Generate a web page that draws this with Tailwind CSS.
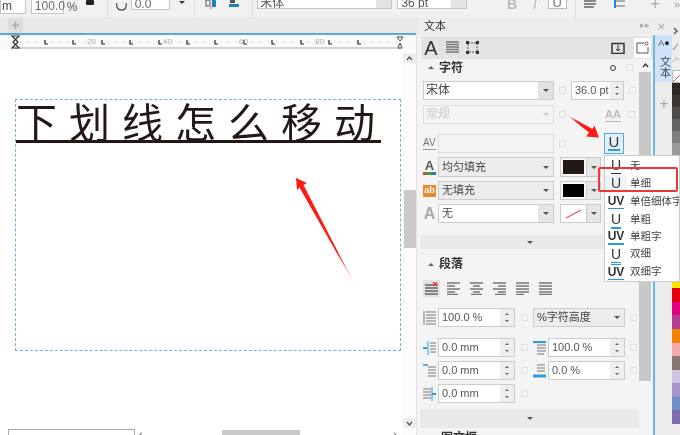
<!DOCTYPE html>
<html lang="zh">
<head>
  <meta charset="UTF-8" />
  <title>文本</title>
  <script src="https://cdn.jsdelivr.net/npm/@tailwindcss/browser@4"></script>
</head>
<body class="m-0 overflow-hidden">
<div class="relative w-[680px] h-[435px] overflow-hidden flex flex-col bg-[#f0f0f0] text-[#444] text-[11px] blur-[0.4px] font-['Liberation_Sans','Noto_Sans_CJK_SC',sans-serif]">

  <!-- top property bar -->
  <div class="h-[17px] flex items-start overflow-hidden shrink-0 bg-[#f1f1f1]">
    <div class="w-[26px] h-[14px] bg-white border border-t-0 border-[#c4c4c4] leading-[13px] text-[12px] pl-[1px]">m</div>
    <div class="ml-[5px] w-[33px] h-[14px] bg-white border border-t-0 border-[#c4c4c4] leading-[13px] text-[12px] pl-[3px] text-[#666]">100.0</div>
    <div class="ml-[3px] w-[14px] leading-[14px] text-[12px] text-[#555]">%</div>
    <div class="ml-[5px] w-[8px] h-[5px] bg-[#222] rounded-[1px]"></div>
    <div class="ml-[13px] w-px h-[17px] bg-[#ddd]"></div>
    <svg class="ml-[7px]" width="13" height="14" viewBox="0 0 13 14" fill="none" stroke="#444" stroke-width="1.2"><path d="M2 3a5 5 0 1 0 9 0"/></svg>
    <div class="ml-[3px] w-[40px] h-[10px] bg-white border border-t-0 border-[#c4c4c4] leading-[8px] text-[12px] pl-[3px] text-[#666]">0.0</div>
    <div class="ml-[9px] mt-[1px] w-0 h-0 border-x-[3px] border-x-transparent border-t-[3px] border-t-[#333]"></div>
    <div class="ml-[9px] w-px h-[17px] bg-[#ddd]"></div>
    <svg class="ml-[10px]" width="12" height="10" viewBox="0 0 12 10"><rect x="1" y="0" width="4" height="6" fill="none" stroke="#555"/><rect x="7" y="0" width="4" height="7" fill="#1e7fb5"/><path d="M5 8h2" stroke="#d33"/></svg>
    <svg class="ml-[11px]" width="12" height="10" viewBox="0 0 12 10"><rect x="2" y="0" width="5" height="3" fill="#555"/><rect x="1" y="4" width="10" height="3" fill="#1e7fb5"/></svg>
    <div class="ml-[12px] w-px h-[17px] bg-[#ddd]"></div>
    <div class="ml-[4px] w-[136px] h-[9px] flex bg-white border border-t-0 border-[#c4c4c4] overflow-hidden">
      <div class="flex-1 pl-[2px] leading-[6px] text-[12px] text-[#555]">宋体</div>
      <div class="w-[15px] bg-[#e4e4e4]"></div>
    </div>
    <div class="ml-[5px] w-[70px] h-[9px] flex bg-white border border-t-0 border-[#c4c4c4] overflow-hidden">
      <div class="flex-1 pl-[3px] leading-[6px] text-[12px] text-[#555]">36 pt</div>
      <div class="w-[15px] bg-[#e4e4e4]"></div>
    </div>
    <div class="ml-[40px] w-[12px] leading-[8px] text-[14px] font-bold text-[#bbb]">B</div>
    <div class="ml-[14px] w-[8px] leading-[8px] text-[14px] italic text-[#bbb]">I</div>
    <div class="ml-[7px] w-[19px] h-[9px] bg-white border border-t-0 border-[#bbb] leading-[5px] text-[13px] text-center text-[#777]">U</div>
    <div class="ml-[8px] w-px h-[17px] bg-[#ddd]"></div>
    <svg class="ml-[7px]" width="14" height="10" viewBox="0 0 14 10" fill="none" stroke="#666"><path d="M1 1h12M1 4h12M1 7h10" stroke-width="1.5"/></svg>
    <svg class="ml-[17px]" width="12" height="10" viewBox="0 0 12 10"><path d="M2 1h9M2 6h9" stroke="#666"/><rect x="0" y="0" width="2" height="8" fill="#1e88d8"/></svg>
    <div class="ml-[25px] leading-[8px] text-[16px] text-[#aaa]">+</div>
    <div class="ml-[14px] leading-[8px] text-[11px] text-[#999]">»</div>
  </div>

  <div class="flex-1 flex min-h-0">
    <!-- drawing area -->
    <div class="w-[416px] flex flex-col shrink-0">
      <div class="h-[18px] bg-[#e9e9e9] border-b-2 border-[#5aa9dc] flex items-center pl-[8px]">
        <div class="w-[15px] h-[15px] bg-[#dedede] text-center leading-[14px] text-[15px] font-bold text-[#aaa]">+</div>
      </div>
      <svg class="shrink-0 bg-[#fafafa]" width="416" height="14" viewBox="0 34 416 14">
        <path d="M15 47h386" stroke="#aaa" stroke-width="1.2"/>
        <path d="M20 41h380" stroke="#bbb" stroke-dasharray="1 7"/>
        <path d="M45 39v4h3M73 39v4h3M102 39v4h3M130 39v4h3M159 39v4h3M187 39v4h3M215 39v4h3M244 39v4h3M272 39v4h3M301 39v4h3M329 39v4h3M358 39v4h3" fill="none" stroke="#222" stroke-width="1.2"/>
        <path d="M12 35h7l-6 6 6 6h-7l6-6z" fill="#fff" stroke="#333" stroke-width="1.2"/>
        <path d="M398 47l2-5 2 5z M397 36h6l-3 4z" fill="#fff" stroke="#444"/>
        <g font-size="8" fill="#aaa" font-family="Liberation Sans"><text x="87" y="43">20</text><text x="163" y="43">40</text><text x="239" y="43">60</text><text x="315" y="43">80</text></g>
      </svg>
      <div class="relative flex-1 bg-white">
        <!-- text frame -->
        <div class="absolute left-[15px] top-[50px] w-[386px] h-[252px] border border-dashed border-[#6db3e0]">
          <div class="h-[43px] w-[365px] border-b-[3px] border-[#231815] text-[41px] leading-[41px] tracking-[12px] whitespace-nowrap text-[#231815] font-normal font-['Noto_Sans_CJK_SC',sans-serif]">下划线怎么移动</div>
        </div>
        <!-- scrollbar -->
        <div class="absolute right-0 top-0 bottom-0 w-[13px] bg-[#fcfcfc] flex flex-col items-center">
          <div class="mt-[4px] w-[13px] h-[10px] bg-[#eee] flex items-center justify-center"><svg width="7" height="5" viewBox="0 0 7 5" fill="none" stroke="#555" stroke-width="1.3"><path d="M1 4l2.5-3L6 4"/></svg></div>
          <div class="mt-[127px] w-[12px] h-[58px] bg-[#c9c9c9]"></div>
          <div class="mt-auto mb-[7px] w-[13px] h-[10px] bg-[#eee] flex items-center justify-center"><svg width="7" height="5" viewBox="0 0 7 5" fill="none" stroke="#555" stroke-width="1.3"><path d="M1 1l2.5 3L6 1"/></svg></div>
        </div>
        <!-- bottom strip -->
        <div class="absolute left-[8px] bottom-[-3px] w-[127px] h-[9px] bg-white border border-[#aaa]"></div>
        <div class="absolute left-[139px] bottom-[-2px] leading-[6px] text-[#333] text-[11px]">‹</div>
        <div class="absolute left-[222px] bottom-0 w-[78px] h-[5px] bg-[#c9c9c9]"></div>
        <div class="absolute left-[393px] bottom-[-2px] leading-[6px] text-[#333] text-[11px]">›</div>
      </div>
    </div>

    <!-- docker -->
    <div class="w-[256px] flex flex-col shrink-0 border-l border-[#e2e2e2]">
      <div class="h-[18px] flex items-center bg-[#ededed] pl-[7px] text-[11px] text-[#333]">
        <span>文本</span>
        <span class="ml-auto text-[#aaa] text-[9px]">▸▸</span>
        <span class="ml-[7px] mr-[7px] text-[#aaa] text-[13px] leading-[13px]">×</span>
      </div>
      <div class="flex-1 flex min-h-0">
        <div class="w-[236px] flex flex-col shrink-0 bg-[#f4f4f4] pl-[3px]">
          <!-- docker tabs -->
          <div class="h-[23px] ml-[1px] mt-[1px] flex items-center bg-[#e3e3e3] shrink-0">
            <div class="w-[16px] ml-[2px] text-center text-[20px] leading-[20px] text-[#333]">A</div>
            <svg class="ml-[7px]" width="13" height="13" viewBox="0 0 13 13"><path d="M0 1h13M0 3.5h13M0 6h13M0 8.5h13M0 11h13" stroke="#777" stroke-width="1.6"/></svg>
            <svg class="ml-[7px]" width="13" height="13" viewBox="0 0 13 13" fill="#333"><path d="M2 2h9v9H2z" fill="none" stroke="#555" stroke-dasharray="2 1"/><rect x="0" y="0" width="3" height="3"/><rect x="10" y="0" width="3" height="3"/><rect x="0" y="10" width="3" height="3"/><rect x="10" y="10" width="3" height="3"/></svg>
            <svg class="ml-[132px]" width="14" height="12" viewBox="0 0 14 12" fill="none" stroke="#333"><rect x="1" y="1.5" width="12" height="10" stroke-width="1.5"/><path d="M7 3v6M5 7l2 2 2-2"/></svg>
            <div class="ml-[9px] w-[17px] h-[20px] bg-white flex items-center justify-center"><svg width="13" height="13" viewBox="0 0 13 13" fill="none" stroke="#555"><path d="M1 2h7M1 2v10h11V6"/><circle cx="10.5" cy="2.5" r="1.5"/></svg></div>
          </div>

          <div class="flex flex-1 min-h-0">
            <div class="w-[219px] shrink-0 flex flex-col">
              <!-- 字符 -->
              <div class="h-[17px] flex items-center shrink-0 pl-[8px]">
                <div class="w-0 h-0 border-x-[3px] border-x-transparent border-b-[3px] border-b-[#666]"></div>
                <div class="ml-[5px] font-bold text-[12px] text-[#333]">字符</div>
                <div class="ml-[147px] w-[6px] h-[6px] rounded-full border border-[#333]"></div>
                <div class="ml-[10px] w-[7px] h-[7px] border border-[#e2e2e2]"></div>
              </div>
              <div class="mt-[5px] h-[19px] flex items-center shrink-0">
                <div class="ml-[3px] w-[131px] h-[19px] flex bg-white border border-[#ccc]">
                  <div class="flex-1 pl-[2px] text-[12px] leading-[17px] text-[#444]">宋体</div>
                  <div class="w-[15px] bg-[#e2e2e2] flex items-center justify-center"><div class="w-0 h-0 border-x-[3px] border-x-transparent border-t-[3px] border-t-[#555]"></div></div>
                </div>
                <div class="ml-[5px] w-[7px] h-[7px] border border-[#e2e2e2]"></div>
                <div class="ml-[5px] w-[53px] h-[19px] flex bg-white border border-[#ccc]">
                  <div class="flex-1 pl-[3px] leading-[17px] text-[#555]">36.0 pt</div>
                  <div class="w-[13px] bg-[#eee] flex flex-col items-center justify-center gap-[5px]"><div class="w-0 h-0 border-x-[2px] border-x-transparent border-b-[2px] border-b-[#666]"></div><div class="w-0 h-0 border-x-[2px] border-x-transparent border-t-[2px] border-t-[#666]"></div></div>
                </div>
                <div class="ml-[5px] w-[7px] h-[7px] border border-[#e2e2e2]"></div>
              </div>
              <div class="mt-[5px] h-[19px] flex items-center shrink-0">
                <div class="ml-[3px] w-[131px] h-[19px] flex border border-[#ddd]">
                  <div class="flex-1 pl-[2px] text-[12px] leading-[17px] text-[#ccc]">常规</div>
                  <div class="w-[15px] flex items-center justify-center"><div class="w-0 h-0 border-x-[3px] border-x-transparent border-t-[3px] border-t-[#ccc]"></div></div>
                </div>
                <div class="ml-[5px] w-[7px] h-[7px] border border-[#e2e2e2]"></div>
                <div class="ml-[39px] w-[16px] text-[11px] leading-[14px] font-bold text-[#bbb] border-b border-[#bbb] text-center">AA</div>
                <div class="ml-[7px] w-[7px] h-[7px] border border-[#e2e2e2]"></div>
              </div>
              <div class="mt-[10px] h-[19px] flex items-center shrink-0">
                <div class="ml-[3px] w-[13px] text-[10px] leading-[12px] text-[#777] border-b border-[#999]">AV</div>
                <div class="ml-[2px] w-[116px] h-[19px] border border-[#ddd]"></div>
                <div class="ml-[5px] w-[7px] h-[7px] border border-[#e2e2e2]"></div>
              </div>
              <div class="mt-[4px] h-[20px] flex items-center shrink-0">
                <div class="ml-[3px] w-[13px] text-center"><div class="text-[13px] leading-[12px] font-bold text-[#555]">A</div><div class="h-[3px] bg-[linear-gradient(90deg,#e33,#3a3,#36c)]"></div></div>
                <div class="ml-[2px] w-[116px] h-[20px] flex bg-[#ececec] border border-[#ccc]">
                  <div class="flex-1 pl-[3px] text-[11px] leading-[18px] text-[#444]">均匀填充</div>
                  <div class="w-[15px] flex items-center justify-center"><div class="w-0 h-0 border-x-[3px] border-x-transparent border-t-[3px] border-t-[#555]"></div></div>
                </div>
                <div class="ml-[6px] w-[27px] h-[20px] bg-[#f7f7f7] border border-[#ccc] p-[2px]"><div class="w-full h-full bg-[#231815]"></div></div>
                <div class="w-[14px] h-[20px] bg-[#e6e6e6] border border-l-0 border-[#ccc] flex items-center justify-center"><div class="w-0 h-0 border-x-[3px] border-x-transparent border-t-[3px] border-t-[#555]"></div></div>
              </div>
              <div class="mt-[4px] h-[19px] flex items-center shrink-0">
                <div class="ml-[3px] w-[13px] h-[12px] bg-[#ee8a2c] text-[9px] leading-[11px] font-bold text-white text-center">ab</div>
                <div class="ml-[2px] w-[116px] h-[19px] flex bg-[#ececec] border border-[#ccc]">
                  <div class="flex-1 pl-[3px] text-[11px] leading-[17px] text-[#444]">无填充</div>
                  <div class="w-[15px] flex items-center justify-center"><div class="w-0 h-0 border-x-[3px] border-x-transparent border-t-[3px] border-t-[#555]"></div></div>
                </div>
                <div class="ml-[6px] w-[27px] h-[19px] bg-[#f7f7f7] border border-[#ccc] p-[2px]"><div class="w-full h-full bg-black"></div></div>
                <div class="w-[14px] h-[19px] bg-[#e6e6e6] border border-l-0 border-[#ccc] flex items-center justify-center"><div class="w-0 h-0 border-x-[3px] border-x-transparent border-t-[3px] border-t-[#555]"></div></div>
              </div>
              <div class="mt-[4px] h-[19px] flex items-center shrink-0">
                <div class="ml-[3px] w-[13px] text-center text-[16px] leading-[16px] font-bold text-[#aaa]">A</div>
                <div class="ml-[2px] w-[116px] h-[19px] flex bg-white border border-[#ccc]">
                  <div class="flex-1 pl-[3px] text-[11px] leading-[17px] text-[#444]">无</div>
                  <div class="w-[15px] bg-[#e6e6e6] flex items-center justify-center"><div class="w-0 h-0 border-x-[3px] border-x-transparent border-t-[3px] border-t-[#555]"></div></div>
                </div>
                <div class="ml-[6px] w-[27px] h-[19px] bg-white border border-[#ccc] flex items-center justify-center"><svg width="17" height="10" viewBox="0 0 17 10"><path d="M1 9L16 1" stroke="#e8556b" stroke-width="1.2"/></svg></div>
                <div class="w-[14px] h-[19px] bg-[#e6e6e6] border border-l-0 border-[#ccc] flex items-center justify-center"><div class="w-0 h-0 border-x-[3px] border-x-transparent border-t-[3px] border-t-[#555]"></div></div>
              </div>
              <div class="mt-[12px] h-[14px] bg-[#e9e9e9] flex items-center justify-center shrink-0"><div class="w-0 h-0 border-x-[3px] border-x-transparent border-t-[3px] border-t-[#555]"></div></div>

              <!-- 段落 -->
              <div class="mt-[7px] h-[16px] flex items-center shrink-0 pl-[8px]">
                <div class="w-0 h-0 border-x-[3px] border-x-transparent border-b-[3px] border-b-[#666]"></div>
                <div class="ml-[5px] font-bold text-[12px] text-[#333]">段落</div>
              </div>
              <div class="mt-[8px] h-[17px] flex items-center shrink-0">
                <div class="ml-[3px] w-[17px] h-[17px] bg-[#e2e2e2] flex items-center justify-center relative">
                  <svg width="13" height="13" viewBox="0 0 13 13"><path d="M0 3h13M0 6h13M0 9h13M0 12h13" stroke="#666" stroke-width="1.5"/><path d="M8 0l4 4M12 0L8 4" stroke="#e33" stroke-width="1.3"/></svg>
                </div>
                <svg class="ml-[7px]" width="13" height="13" viewBox="0 0 13 13"><path d="M0 1h13M0 4h8M0 7h13M0 10h8M0 12.5h11" stroke="#777" stroke-width="1.4"/></svg>
                <svg class="ml-[10px]" width="13" height="13" viewBox="0 0 13 13"><path d="M0 1h13M3 4h7M0 7h13M3 10h7M1 12.5h11" stroke="#777" stroke-width="1.4"/></svg>
                <svg class="ml-[10px]" width="13" height="13" viewBox="0 0 13 13"><path d="M0 1h13M5 4h8M0 7h13M5 10h8M2 12.5h11" stroke="#777" stroke-width="1.4"/></svg>
                <svg class="ml-[10px]" width="13" height="13" viewBox="0 0 13 13"><path d="M0 1h13M0 4h13M0 7h13M0 10h13M0 12.5h8" stroke="#777" stroke-width="1.4"/></svg>
                <svg class="ml-[10px]" width="13" height="13" viewBox="0 0 13 13"><path d="M0 1h13M0 4h13M0 7h13M0 10h13M0 12.5h13" stroke="#777" stroke-width="1.4"/></svg>
              </div>
              <div class="mt-[11px] h-[19px] flex items-center shrink-0">
                <svg class="ml-[3px]" width="13" height="14" viewBox="0 0 13 14"><path d="M1 0v14" stroke="#777"/><path d="M3 1h10M3 4h10M3 7h10M3 10h10M3 13h10" stroke="#777" stroke-width="1.2"/></svg>
                <div class="ml-[2px] w-[77px] h-[19px] flex bg-white border border-[#ccc]"><div class="flex-1 pl-[3px] leading-[17px] text-[#555]">100.0 %</div><div class="w-[14px] bg-[#eee] flex flex-col items-center justify-center gap-[5px]"><div class="w-0 h-0 border-x-[2px] border-x-transparent border-b-[2px] border-b-[#666]"></div><div class="w-0 h-0 border-x-[2px] border-x-transparent border-t-[2px] border-t-[#666]"></div></div></div>
                <div class="ml-[6px] w-[7px] h-[7px] border border-[#e2e2e2]"></div>
                <div class="ml-[5px] w-[92px] h-[19px] flex bg-[#ececec] border border-[#ccc]"><div class="flex-1 pl-[3px] leading-[17px] text-[#444]">%字符高度</div><div class="w-[15px] flex items-center justify-center"><div class="w-0 h-0 border-x-[3px] border-x-transparent border-t-[3px] border-t-[#555]"></div></div></div>
                <div class="ml-[5px] w-[7px] h-[7px] border border-[#e2e2e2]"></div>
              </div>
              <div class="mt-[11px] h-[19px] flex items-center shrink-0">
                <svg class="ml-[3px]" width="13" height="14" viewBox="0 0 13 14"><path d="M0 7h4" stroke="#2b9bdc" stroke-width="2"/><path d="M5 0v14" stroke="#2b9bdc"/><path d="M7 2h6M7 5h6M7 8h6M7 11h6" stroke="#777" stroke-width="1.2"/></svg>
                <div class="ml-[2px] w-[77px] h-[19px] flex bg-white border border-[#ccc]"><div class="flex-1 pl-[3px] leading-[17px] text-[#555]">0.0 mm</div><div class="w-[14px] bg-[#eee] flex flex-col items-center justify-center gap-[5px]"><div class="w-0 h-0 border-x-[2px] border-x-transparent border-b-[2px] border-b-[#666]"></div><div class="w-0 h-0 border-x-[2px] border-x-transparent border-t-[2px] border-t-[#666]"></div></div></div>
                <div class="ml-[6px] w-[7px] h-[7px] border border-[#e2e2e2]"></div>
                <svg class="ml-[5px]" width="13" height="14" viewBox="0 0 13 14"><path d="M0 1h13" stroke="#2b9bdc" stroke-width="2.2"/><path d="M4 4h9M4 7h9M4 10h9M4 13h7" stroke="#777" stroke-width="1.2"/></svg>
                <div class="ml-[2px] w-[77px] h-[19px] flex bg-white border border-[#ccc]"><div class="flex-1 pl-[3px] leading-[17px] text-[#555]">100.0 %</div><div class="w-[14px] bg-[#eee] flex flex-col items-center justify-center gap-[5px]"><div class="w-0 h-0 border-x-[2px] border-x-transparent border-b-[2px] border-b-[#666]"></div><div class="w-0 h-0 border-x-[2px] border-x-transparent border-t-[2px] border-t-[#666]"></div></div></div>
                <div class="ml-[5px] w-[7px] h-[7px] border border-[#e2e2e2]"></div>
              </div>
              <div class="mt-[4px] h-[19px] flex items-center shrink-0">
                <svg class="ml-[3px]" width="13" height="14" viewBox="0 0 13 14"><path d="M0 1h5" stroke="#2b9bdc" stroke-width="1.6"/><path d="M5 3h8M5 6h8M5 9h8M5 12h8" stroke="#777" stroke-width="1.2"/></svg>
                <div class="ml-[2px] w-[77px] h-[19px] flex bg-white border border-[#ccc]"><div class="flex-1 pl-[3px] leading-[17px] text-[#555]">0.0 mm</div><div class="w-[14px] bg-[#eee] flex flex-col items-center justify-center gap-[5px]"><div class="w-0 h-0 border-x-[2px] border-x-transparent border-b-[2px] border-b-[#666]"></div><div class="w-0 h-0 border-x-[2px] border-x-transparent border-t-[2px] border-t-[#666]"></div></div></div>
                <div class="ml-[6px] w-[7px] h-[7px] border border-[#e2e2e2]"></div>
                <svg class="ml-[5px]" width="13" height="14" viewBox="0 0 13 14"><path d="M4 1h8M4 4h8M4 7h8" stroke="#777" stroke-width="1.2"/><path d="M0 12h13" stroke="#2b9bdc" stroke-width="3"/></svg>
                <div class="ml-[2px] w-[77px] h-[19px] flex bg-white border border-[#ccc]"><div class="flex-1 pl-[3px] leading-[17px] text-[#555]">0.0 %</div><div class="w-[14px] bg-[#eee] flex flex-col items-center justify-center gap-[5px]"><div class="w-0 h-0 border-x-[2px] border-x-transparent border-b-[2px] border-b-[#666]"></div><div class="w-0 h-0 border-x-[2px] border-x-transparent border-t-[2px] border-t-[#666]"></div></div></div>
                <div class="ml-[5px] w-[7px] h-[7px] border border-[#e2e2e2]"></div>
              </div>
              <div class="mt-[4px] h-[19px] flex items-center shrink-0">
                <svg class="ml-[3px]" width="13" height="14" viewBox="0 0 13 14"><path d="M0 2h8M0 5h8M0 8h8M0 11h8" stroke="#777" stroke-width="1.2"/><path d="M9 0v14" stroke="#2b9bdc"/><path d="M9 7h4" stroke="#2b9bdc" stroke-width="2"/></svg>
                <div class="ml-[2px] w-[77px] h-[19px] flex bg-white border border-[#ccc]"><div class="flex-1 pl-[3px] leading-[17px] text-[#555]">0.0 mm</div><div class="w-[14px] bg-[#eee] flex flex-col items-center justify-center gap-[5px]"><div class="w-0 h-0 border-x-[2px] border-x-transparent border-b-[2px] border-b-[#666]"></div><div class="w-0 h-0 border-x-[2px] border-x-transparent border-t-[2px] border-t-[#666]"></div></div></div>
                <div class="ml-[6px] w-[7px] h-[7px] border border-[#e2e2e2]"></div>
              </div>
              <div class="mt-[6px] h-[19px] bg-[#e9e9e9] flex items-center justify-center shrink-0"><div class="w-0 h-0 border-x-[3px] border-x-transparent border-t-[3px] border-t-[#555]"></div></div>
              <div class="mt-[3px] pl-[21px] font-bold text-[12px] leading-[14px] text-[#333] shrink-0">图文框</div>
            </div>
            <!-- docker scrollbar -->
            <div class="w-[13px] shrink-0 flex flex-col">
              <div class="h-[13px] flex items-center justify-center"><svg width="7" height="5" viewBox="0 0 7 5" fill="none" stroke="#333" stroke-width="1.3"><path d="M1 4l2.5-3L6 4"/></svg></div>
              <div class="h-[309px] w-[12px] bg-[#c8c8c8]"></div>
            </div>
          </div>
        </div>
        <!-- side tab strip -->
        <div class="w-[20px] shrink-0 bg-[#ececec] border-l-2 border-[#6bb6e2] flex flex-col items-center">
          <div class="w-full h-[47px] bg-[#cfe2f8] flex flex-col items-center">
            <div class="text-[9px] leading-[12px] text-[#556] mt-[2px]">A<span class="text-[#223]">●</span></div>
            <div class="mt-[7px] text-[11px] leading-[11px] text-[#445] [writing-mode:vertical-rl]">文本</div>
          </div>
          <div class="mt-[14px] text-[16px] leading-[16px] text-[#aaa]">+</div>
        </div>
      </div>
    </div>

    <!-- colour palette -->
    <div class="w-[8px] shrink-0 flex flex-col bg-[#ededed]">
      <svg class="shrink-0" width="8" height="53" viewBox="0 0 8 53" fill="none" stroke="#888"><path d="M2 11l3 3-3 3" stroke="#555" stroke-width="1.4"/><path d="M1 33l5-6" stroke="#aaa" stroke-width="1.4"/><path d="M1 45l3-4 3 2" stroke="#bbb" stroke-width="1.2"/></svg>
      <div class="h-[13px] bg-white border-y border-l border-[#bbb] shrink-0 overflow-hidden"><svg width="8" height="13" viewBox="0 0 8 13"><path d="M0 11L8 3" stroke="#e8556b"/></svg></div>
      <div class="h-[12px] bg-[#2b2622] shrink-0"></div>
      <div class="h-[12px] bg-[#3b3633] shrink-0"></div>
      <div class="h-[12px] bg-[#4e4b49] shrink-0"></div>
      <div class="h-[12px] bg-[#666462] shrink-0"></div>
      <div class="h-[12px] bg-[#7f7e7d] shrink-0"></div>
      <div class="h-[12px] bg-[#999] shrink-0"></div>
      <div class="h-[127px] shrink-0"></div>
      <div class="h-[6px] bg-[#ffe600] shrink-0"></div>
      <div class="h-[14px] bg-[#e60012] shrink-0"></div>
      <div class="h-[13px] bg-[#e4007f] shrink-0"></div>
      <div class="h-[14px] bg-[#b23d8f] shrink-0"></div>
      <div class="h-[14px] bg-[#f08300] shrink-0"></div>
      <div class="h-[13px] bg-[#f4a9ad] shrink-0"></div>
      <div class="h-[14px] bg-[#877870] shrink-0"></div>
      <div class="h-[13px] bg-[#cdc5e2] shrink-0"></div>
      <div class="h-[14px] bg-[#a596cc] shrink-0"></div>
      <div class="h-[13px] bg-[#6f8fc9] shrink-0"></div>
      <div class="h-[14px] bg-[#7e6bae] shrink-0"></div>
    </div>
  </div>

  <!-- U button and underline menu -->
  <div class="absolute left-[604px] top-[133px] w-[20px] h-[21px] bg-[#e3effb] border border-[#56a8dd] text-center text-[15px] leading-[16px] font-medium text-[#333]">U<div class="mx-auto -mt-[1px] w-[12px] h-[2px] bg-[#2b9bdc]"></div></div>
  <div class="absolute left-[604px] top-[155px] w-[76px] h-[127px] bg-white border border-[#ccc] flex flex-col text-[10.5px] text-[#444] pt-[1px] overflow-hidden">
    <div class="h-[18px] flex items-center"><div class="w-[22px] shrink-0 text-center text-[14px] leading-[13px] text-[#333]"><span class="border-b border-[#333]">U</span></div><span class="ml-[3px]">无</span></div>
    <div class="h-[18px] flex items-center"><div class="w-[22px] shrink-0 h-full bg-[#eef3f8] text-center text-[14px] leading-[16px] text-[#333]"><span class="border-b border-[#2b9bdc]">U</span></div><span class="ml-[3px]">单细</span></div>
    <div class="h-[18px] flex items-center whitespace-nowrap"><div class="w-[22px] shrink-0 text-center text-[12px] leading-[13px] font-bold text-[#333]"><span class="border-b border-[#2b9bdc]">UV</span></div><span class="ml-[3px]">单倍细体字</span></div>
    <div class="h-[18px] flex items-center"><div class="w-[22px] shrink-0 text-center text-[14px] leading-[13px] text-[#333]"><span class="border-b-2 border-[#2b9bdc]">U</span></div><span class="ml-[3px]">单粗</span></div>
    <div class="h-[17px] flex items-center"><div class="w-[22px] shrink-0 text-center text-[12px] leading-[13px] font-bold text-[#333]"><span class="border-b-2 border-[#2b9bdc]">UV</span></div><span class="ml-[3px]">单粗字</span></div>
    <div class="h-[18px] flex items-center"><div class="w-[22px] shrink-0 text-center text-[14px] leading-[13px] text-[#333]"><span class="border-b-[3px] border-double border-[#2b9bdc]">U</span></div><span class="ml-[3px]">双细</span></div>
    <div class="h-[18px] flex items-center"><div class="w-[22px] shrink-0 text-center text-[12px] leading-[13px] font-bold text-[#333]"><span class="border-b-[3px] border-double border-[#2b9bdc]">UV</span></div><span class="ml-[3px]">双细字</span></div>
  </div>

  <!-- annotations -->
  <div class="absolute left-[598px] top-[167px] w-[80px] h-[25px] border-2 border-[#e53a35] rounded-[2px]"></div>
  <svg class="absolute left-0 top-0 pointer-events-none" width="680" height="435" viewBox="0 0 680 435">
    <defs>
      <linearGradient id="fade" x1="296" y1="178" x2="355" y2="285" gradientUnits="userSpaceOnUse">
        <stop offset="0" stop-color="#ff1a12"/><stop offset="0.7" stop-color="#ff1a12"/><stop offset="1" stop-color="#ff1a12" stop-opacity="0.1"/>
      </linearGradient>
      <linearGradient id="fade2" x1="598" y1="137" x2="567" y2="115" gradientUnits="userSpaceOnUse">
        <stop offset="0" stop-color="#ff1a12"/><stop offset="0.7" stop-color="#ff1a12"/><stop offset="1" stop-color="#ff1a12" stop-opacity="0.1"/>
      </linearGradient>
    </defs>
    <path d="M296 178L307 183L303.500 185L355 285L299.500 187.500L297 190z" fill="url(#fade)"/>
    <path d="M599 137.500L586 136.500L589 132.500L567 115L592.500 129L594.500 125.500z" fill="url(#fade2)"/>
  </svg>
</div>
</body>
</html>
